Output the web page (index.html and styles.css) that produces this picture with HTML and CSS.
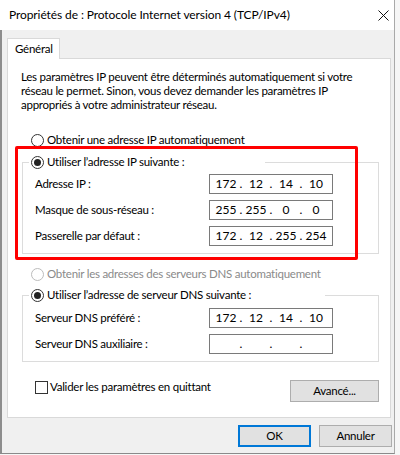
FILE: index.html
```html
<!DOCTYPE html>
<html lang="fr">
<head>
<meta charset="utf-8">
<title>Propriétés de : Protocole Internet version 4 (TCP/IPv4)</title>
<link rel="stylesheet" href="styles.css">
</head>
<body>
<div class="window">
  <div class="titlebar">
    <span class="title">Propriétés de : Protocole Internet version 4 (TCP/IPv4)</span>
    <svg class="close" width="11" height="11" viewBox="0 0 11 11"><path d="M0.5 0.5 L10.5 10.5 M10.5 0.5 L0.5 10.5" stroke="#111" stroke-width="1" fill="none"/></svg>
  </div>
  <div class="client">
    <div class="tabs"><div class="tab">Général</div></div>
    <div class="panel">
      <p class="desc">Les paramètres IP peuvent être déterminés automatiquement si votre<br>réseau le permet. Sinon, vous devez demander les paramètres IP<br>appropriés à votre administrateur réseau.</p>

      <div class="opt row-auto"><span class="radio"></span>Obtenir une adresse IP automatiquement</div>

      <fieldset class="group g1">
        <legend class="opt legend l1"><span class="radio checked"></span>Utiliser l’adresse IP suivante :</legend>
        <div class="fields">
          <span class="label">Adresse IP :</span>
          <div class="ip"><span class="oct">172</span><span class="dot">.</span><span class="oct">12</span><span class="dot">.</span><span class="oct">14</span><span class="dot">.</span><span class="oct">10</span></div>
          <span class="label">Masque de sous-réseau :</span>
          <div class="ip"><span class="oct">255</span><span class="dot">.</span><span class="oct">255</span><span class="dot">.</span><span class="oct">0</span><span class="dot">.</span><span class="oct">0</span></div>
          <span class="label">Passerelle par défaut :</span>
          <div class="ip"><span class="oct">172</span><span class="dot">.</span><span class="oct">12</span><span class="dot">.</span><span class="oct">255</span><span class="dot">.</span><span class="oct">254</span></div>
        </div>
      </fieldset>

      <div class="opt row-dis disabled"><span class="radio"></span>Obtenir les adresses des serveurs DNS automatiquement</div>

      <fieldset class="group g2">
        <legend class="opt legend l2"><span class="radio checked"></span>Utiliser l’adresse de serveur DNS suivante :</legend>
        <div class="fields">
          <span class="label">Serveur DNS préféré :</span>
          <div class="ip"><span class="oct">172</span><span class="dot">.</span><span class="oct">12</span><span class="dot">.</span><span class="oct">14</span><span class="dot">.</span><span class="oct">10</span></div>
          <span class="label">Serveur DNS auxiliaire :</span>
          <div class="ip"><span class="oct"></span><span class="dot">.</span><span class="oct"></span><span class="dot">.</span><span class="oct"></span><span class="dot">.</span><span class="oct"></span></div>
        </div>
      </fieldset>

      <div class="bottom-row">
        <div class="opt"><span class="check"></span>Valider les paramètres en quittant</div>
        <div class="btn adv">Avancé...</div>
      </div>

      <div class="highlight"></div>
    </div>
    <div class="footer">
      <div class="btn ok">OK</div>
      <div class="btn">Annuler</div>
    </div>
  </div>
</div>
</body>
</html>
```
FILE: styles.css
```css
* { box-sizing: border-box; }
html, body { margin: 0; padding: 0; }
body {
  width: 400px;
  height: 455px;
  overflow: hidden;
  background: #f6f6f6;
  font-family: Lato, "Noto Sans", sans-serif;
  font-size: 11.5px;
  letter-spacing: -0.25px;
  color: #000;
}
.window {
  width: 395px;
  height: 454px;
  background: #f0f0f0;
  border-right: 1px solid #a9a9a9;
  border-bottom: 1px solid #8a8a8a;
  display: flex;
  flex-direction: column;
}
.titlebar {
  height: 30px;
  flex: none;
  background: #fff;
  display: flex;
  align-items: center;
  padding-left: 9px;
  padding-right: 5px;
}
.title {
  flex: 1;
  font-size: 12px;
  letter-spacing: -0.1px;
  line-height: 16px;
  white-space: nowrap;
}
.close { display: block; margin-top: 1px; }
.client {
  flex: 1;
  border-left: 2px solid #8d8d8d;
  padding: 8px 2px 0 5px;
  display: flex;
  flex-direction: column;
}
.tabs { display: flex; height: 20px; }
.tab {
  position: relative;
  z-index: 1;
  width: 53px;
  height: 21px;
  background: #fff;
  border: 1px solid #d9d9d9;
  border-bottom: none;
  padding-left: 7px;
  line-height: 19px;
}
.panel {
  position: relative;
  width: 384px;
  height: 360px;
  background: #fff;
  border: 1px solid #d9d9d9;
  display: flex;
  flex-direction: column;
  align-items: flex-start;
}
.desc {
  margin: 11px 0 0 13px;
  line-height: 14px;
  white-space: nowrap;
}
.opt {
  display: flex;
  align-items: center;
  height: 14px;
  line-height: 14px;
  white-space: nowrap;
}
.radio {
  flex: none;
  position: relative;
  width: 13px;
  height: 13px;
  border: 1px solid #333;
  border-radius: 50%;
  background: #fff;
  margin-right: 3px;
}
.radio.checked::after {
  content: "";
  position: absolute;
  left: 2px;
  top: 2px;
  width: 7px;
  height: 7px;
  border-radius: 50%;
  background: #222;
}
.row-auto { margin: 21px 0 0 23px; }
.disabled { color: #8a8a8a; }
.disabled .radio { border-color: #bcbcbc; }
.row-dis { margin: 13px 0 0 23px; }
.group {
  margin: 8px 0 0 14px;
  width: 357px;
  min-inline-size: 0;
  border: 1px solid #dcdcdc;
  padding: 5px 0 7px 0;
}
.g2 { margin-top: 7px; padding-top: 6px; }
.legend {
  margin-left: 6px;
  padding: 0 0 0 2px;
  background: #fff;
}
.l1 { width: 236px; }
.l2 { width: 296px; }
.fields {
  display: grid;
  grid-template-columns: 174px 124px;
  grid-auto-rows: 20px;
  row-gap: 6px;
  align-items: center;
  padding-left: 12px;
}
.label { white-space: nowrap; line-height: 14px; }
.ip {
  height: 20px;
  border: 1px solid #7a7a7a;
  background: #fff;
  display: flex;
  align-items: center;
  padding-left: 3px;
  line-height: 16px;
  font-size: 12px;
  letter-spacing: 0;
}
.oct { width: 26px; text-align: center; }
.dot { width: 4px; text-align: center; }
.bottom-row {
  margin-top: 18px;
  width: 100%;
  display: flex;
  justify-content: space-between;
  align-items: flex-start;
  padding: 0 11px 0 27px;
}
.check {
  flex: none;
  width: 13px;
  height: 13px;
  border: 1px solid #333;
  background: #fff;
  margin-right: 2px;
}
.btn {
  height: 22px;
  width: 73px;
  background: #e1e1e1;
  border: 1px solid #adadad;
  text-align: center;
  line-height: 20px;
}
.adv { width: 89px; }
.ok { border: 2px solid #0078d7; line-height: 18px; }
.footer {
  margin-top: 7px;
  display: flex;
  justify-content: flex-end;
  gap: 8px;
}
.highlight {
  position: absolute;
  left: 7px;
  top: 87px;
  width: 343px;
  height: 114px;
  border: 3px solid #ff0000;
  border-radius: 2px;
  pointer-events: none;
}
```
